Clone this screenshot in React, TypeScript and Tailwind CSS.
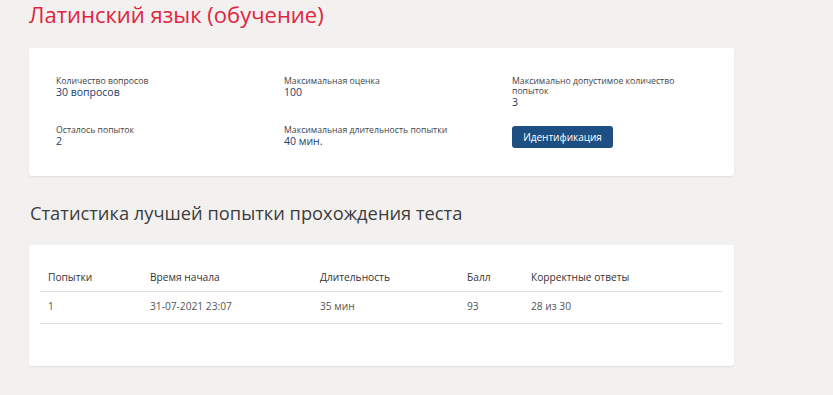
import React from "react";

function Item({ label, value, wide }: { label: string; value: string; wide?: boolean }) {
  return (
    <div>
      <div className={"text-[8.7px] leading-[10px] text-[#444]" + (wide ? " w-[200px]" : "")}>{label}</div>
      <div className="text-[10.5px] leading-[12px] text-[#1c3c6b]">{value}</div>
    </div>
  );
}

export default function App() {
  return (
    <div
      className="min-h-[395px] w-[833px] bg-[#f2f1ef] pl-[29px]"
      style={{ fontFamily: '"Open Sans", "Liberation Sans", sans-serif' }}
    >
      <h1 className="text-[22px] leading-[26px] font-medium text-[#e0243e] pt-[1px] h-[27px]">
        Латинский язык (обучение)
      </h1>

      <div className="mt-[21px] w-[705px] h-[128px] bg-white rounded-[3px] shadow-[0_1px_2px_rgba(0,0,0,0.08)] pl-[27px] pt-[28px]">
        <div className="grid grid-cols-[228px_228px_228px]">
          <div className="h-[49px]">
            <Item label="Количество вопросов" value="30 вопросов" />
          </div>
          <div className="h-[49px]">
            <Item label="Максимальная оценка" value="100" />
          </div>
          <div className="h-[49px]">
            <Item label="Максимально допустимое количество попыток" value="3" wide />
          </div>
          <Item label="Осталось попыток" value="2" />
          <Item label="Максимальная длительность попытки" value="40 мин." />
          <div className="-mt-[2px]">
            <button className="w-[101px] h-[22px] rounded-[3px] bg-[#1d4f82] text-white text-[10px] leading-[22px] text-center">
              Идентификация
            </button>
          </div>
        </div>
      </div>

      <h2 className="mt-[25px] text-[18.3px] leading-[24px] text-[#3d3d3d] pl-[1px]">
        Статистика лучшей попытки прохождения теста
      </h2>

      <div className="mt-[20px] w-[705px] h-[121px] bg-white rounded-[3px] shadow-[0_1px_2px_rgba(0,0,0,0.08)] pt-[24px] pl-[11px]">
        <table className="w-[682px] border-collapse text-[10.2px] table-fixed">
          <colgroup>
            <col className="w-[102px]" />
            <col className="w-[170px]" />
            <col className="w-[147px]" />
            <col className="w-[64px]" />
            <col className="w-[199px]" />
          </colgroup>
          <thead>
            <tr className="border-b border-[#dedede] h-[22px]">
              {["Попытки", "Время начала", "Длительность", "Балл", "Корректные ответы"].map((h) => (
                <th key={h} className="text-left font-normal text-[#333] pl-[8px] align-top leading-[16px]">
                  {h}
                </th>
              ))}
            </tr>
          </thead>
          <tbody>
            <tr className="border-b border-[#dedede] h-[32px]">
              {["1", "31-07-2021 23:07", "35 мин", "93", "28 из 30"].map((c, i) => (
                <td key={i} className="pl-[8px] text-[#555] align-middle">
                  {c}
                </td>
              ))}
            </tr>
          </tbody>
        </table>
      </div>
    </div>
  );
}
